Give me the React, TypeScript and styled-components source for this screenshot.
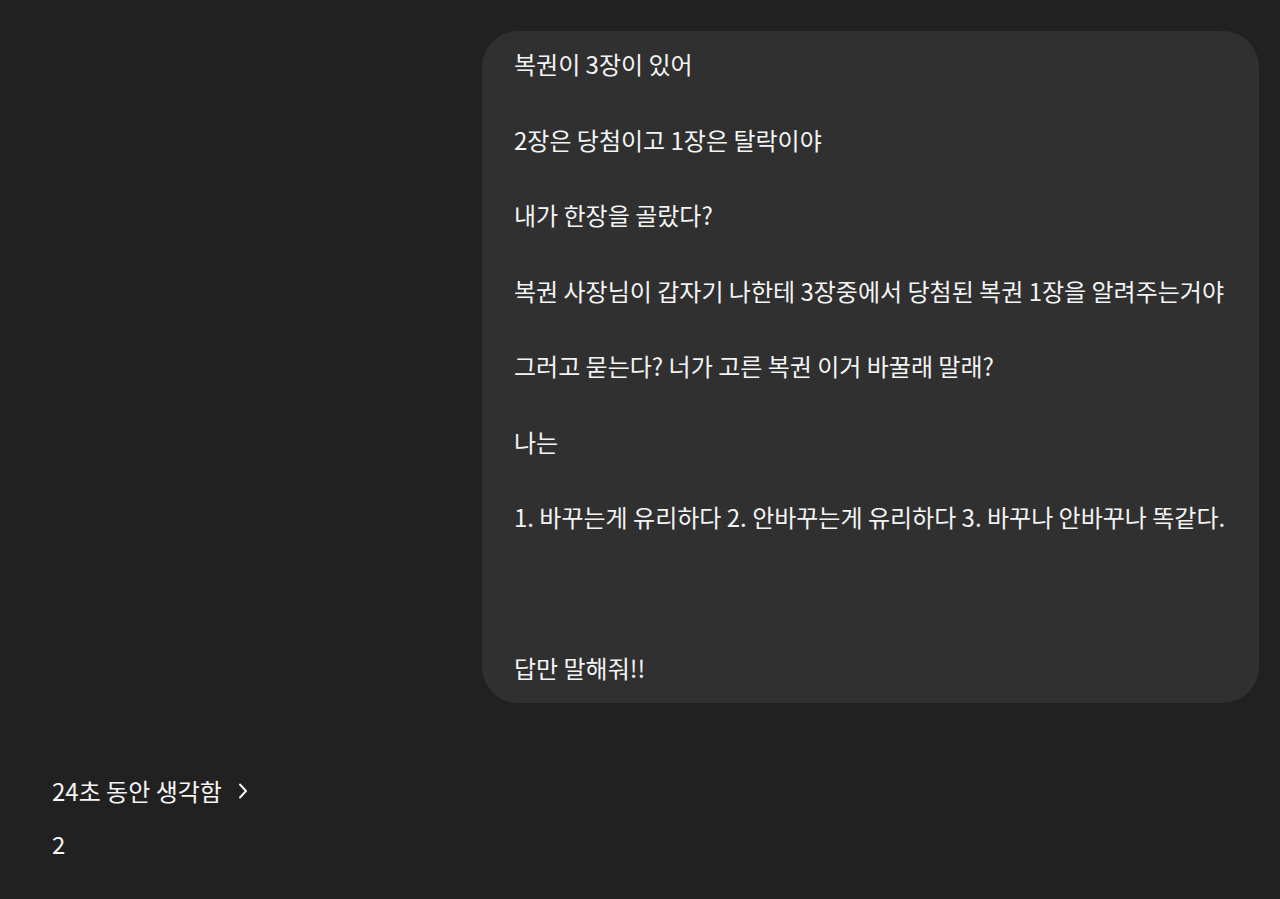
import React from "react";
import styled, { createGlobalStyle } from "styled-components";

const Global = createGlobalStyle`
  html, body { margin: 0; padding: 0; background: #212121; }
  body { font-family: "Noto Sans CJK KR", "Noto Sans", sans-serif; color: #f4f4f4; }
`;

const Page = styled.div`
  min-height: 899px;
  background: #212121;
  display: flex;
  flex-direction: column;
  padding-top: 31px;
  box-sizing: border-box;
`;

const UserRow = styled.div`
  display: flex;
  justify-content: flex-end;
  padding-right: 21px;
`;

const Bubble = styled.div`
  width: 777px;
  box-sizing: border-box;
  background: #303030;
  border-radius: 36px;
  padding: 14px 32px 16px 32px;
  font-size: 24px;
  line-height: 37.75px;
  white-space: pre;
`;

const Assistant = styled.div`
  display: flex;
  flex-direction: column;
  padding: 70px 0 0 52px;
  font-size: 24px;
`;

const Thinking = styled.button`
  all: unset;
  display: flex;
  align-items: center;
  gap: 15px;
  height: 36px;
  line-height: 36px;
  color: #f4f4f4;
  font-size: 24px;
  cursor: pointer;
`;

const Answer = styled.div`
  margin-top: 17px;
  line-height: 36px;
`;

const text = `복권이 3장이 있어

2장은 당첨이고 1장은 탈락이야

내가 한장을 골랐다?

복권 사장님이 갑자기 나한테 3장중에서 당첨된 복권 1장을 알려주는거야

그러고 묻는다? 너가 고른 복권 이거 바꿀래 말래?

나는

1. 바꾸는게 유리하다 2. 안바꾸는게 유리하다 3. 바꾸나 안바꾸나 똑같다.



답만 말해줘!!`;

export default function App() {
  return (
    <>
      <Global />
      <Page>
        <UserRow>
          <Bubble>{text}</Bubble>
        </UserRow>
        <Assistant>
          <Thinking>
            24초 동안 생각함
            <svg width="12" height="18" viewBox="0 0 12 18" fill="none">
              <path d="M3 2.5 L9 9 L3 15.5" stroke="#f4f4f4" strokeWidth="2" strokeLinecap="round" strokeLinejoin="round" />
            </svg>
          </Thinking>
          <Answer>2</Answer>
        </Assistant>
      </Page>
    </>
  );
}
